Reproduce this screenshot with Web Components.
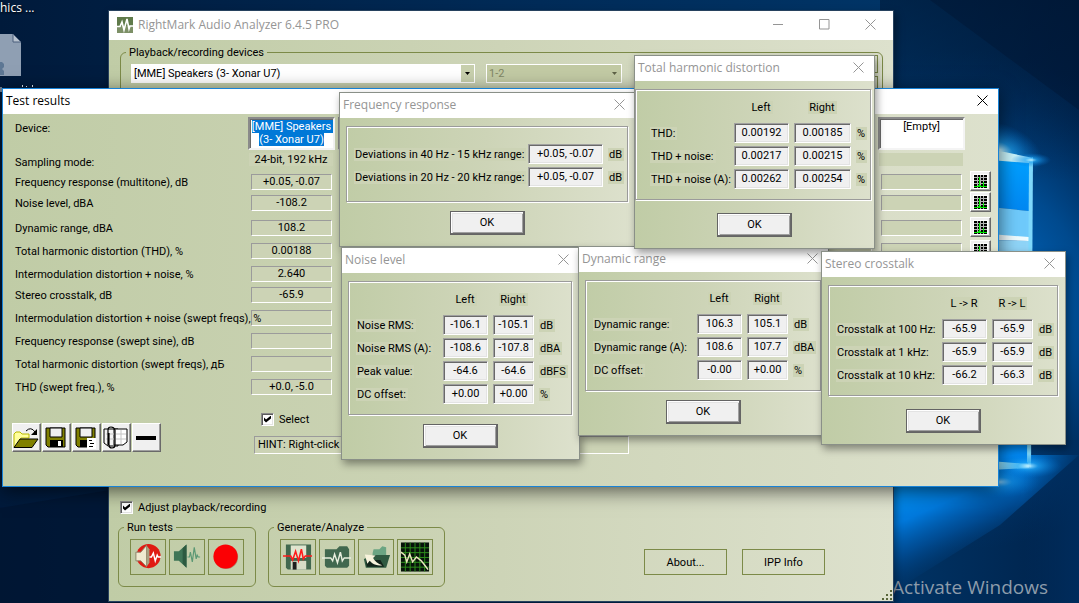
<!DOCTYPE html>
<html lang="en">
<head>
<meta charset="utf-8">
<title>RightMark Audio Analyzer 6.4.5 PRO</title>
<style>
  html, body { margin: 0; height: 100%; }
  body {
    font: 11px/13px Roboto, "Liberation Sans", Arial, sans-serif;
    color: #000;
    background: #001b3d;
    --caption-font: 12px/16px "Open Sans", "Noto Sans", sans-serif;
    --olive: #7c8a48;
    --patch: #ccd3b5;
    --face: linear-gradient(90deg, #c0cca6, #cdd4b7 50%, #dde1cd);
  }
  app-window, result-dialog { position: absolute; left: var(--x); top: var(--y); width: var(--w); }
  .main { --x: 108px; --y: 10px; --w: 784px; bottom: 1px; }
  .results { --x: 2px; --y: 88px; --w: 995px; }
  .freq { --x: 339px; --y: 92px; --w: 297px; }
  .noise { --x: 341px; --y: 247px; --w: 239px; }
  .dynamic { --x: 578px; --y: 246px; --w: 251px; }
  .thd { --x: 634px; --y: 55px; --w: 241px; }
  .crosstalk { --x: 821px; --y: 251px; --w: 245px; }
</style>
</head>
<body>
<desk-top>
  <app-window class="main" kind="main" heading="RightMark Audio Analyzer 6.4.5 PRO"><main-panel></main-panel></app-window>
  <app-window class="results" kind="active" heading="Test results"><results-panel></results-panel></app-window>
  <result-dialog class="freq" heading="Frequency response" widths="174,80"
    rows="Deviations in 40 Hz - 15 kHz range:|+0.05, -0.07|dB;Deviations in 20 Hz - 20 kHz range:|+0.05, -0.07|dB"></result-dialog>
  <result-dialog class="noise" heading="Noise level" cols="Left,Right" widths="87,50,46"
    rows="Noise RMS:|-106.1|-105.1|dB;Noise RMS (A):|-108.6|-107.8|dBA;Peak value:|-64.6|-64.6|dBFS;DC offset:|+0.00|+0.00|%"></result-dialog>
  <result-dialog class="dynamic" heading="Dynamic range" cols="Left,Right" widths="104,50,46"
    rows="Dynamic range:|106.3|105.1|dB;Dynamic range (A):|108.6|107.7|dBA;DC offset:|-0.00|+0.00|%"></result-dialog>
  <result-dialog class="thd" heading="Total harmonic distortion" cols="Left,Right" widths="84,60,62" flush gap="wide"
    rows="THD:|0.00192|0.00185|%;THD + noise:|0.00217|0.00215|%;THD + noise (A):|0.00262|0.00254|%"></result-dialog>
  <result-dialog class="crosstalk" heading="Stereo crosstalk" cols="L -&gt; R,R -&gt; L" widths="106,50,46" gap="wide"
    rows="Crosstalk at 100 Hz:|-65.9|-65.9|dB;Crosstalk at 1 kHz:|-65.9|-65.9|dB;Crosstalk at 10 kHz:|-66.2|-66.3|dB"></result-dialog>
</desk-top>

<script>
const define = (name, css, html, setup) => customElements.define(name, class extends HTMLElement {
  connectedCallback() {
    if (this.shadowRoot) return;
    const root = this.attachShadow({ mode: "open" });
    root.innerHTML = `<style>*{box-sizing:border-box}${css}</style>` + (typeof html === "function" ? html(this) : html);
    if (setup) setup(root, this);
  }
});

/* Desktop: wallpaper, a desktop icon and the activation notice. */
define("desk-top", `
  :host { display: block; position: relative; height: 100vh; overflow: hidden; }
  .wall { position: absolute; inset: 0; width: 100%; height: 100%; }
  .item { position: absolute; left: 0; top: 0; font: var(--caption-font); color: #fff; white-space: nowrap; text-shadow: 1px 1px 2px #000; }
  .item span { display: block; height: 30px; }
  .item svg { display: block; }
  .notice { position: absolute; right: 31px; bottom: 2px; font: 19px/27px "Open Sans", "Noto Sans", sans-serif; color: #8d9cab; white-space: nowrap; }
`, `
  <svg class="wall" viewBox="0 0 1079 603" preserveAspectRatio="xMaxYMin slice" aria-hidden="true">
    <defs>
      <linearGradient id="sky" x1="0" x2="1"><stop offset="0" stop-color="#001a3b"/><stop offset=".5" stop-color="#002b58"/><stop offset=".82" stop-color="#003466"/><stop offset="1" stop-color="#00224a"/></linearGradient>
      <radialGradient id="glow" gradientUnits="userSpaceOnUse" cx="960" cy="300" r="250"><stop offset="0" stop-color="#0078dc"/><stop offset=".5" stop-color="#005aaa" stop-opacity=".7"/><stop offset="1" stop-color="#003a78" stop-opacity="0"/></radialGradient>
      <radialGradient id="flare"><stop offset="0" stop-color="#c8f4ff"/><stop offset=".3" stop-color="#1fa4f4" stop-opacity=".7"/><stop offset="1" stop-color="#0070d0" stop-opacity="0"/></radialGradient>
      <linearGradient id="pane" x1="0" x2="0" y1="0" y2="1"><stop offset="0" stop-color="#00a0ff"/><stop offset="1" stop-color="#0087f2"/></linearGradient>
      <linearGradient id="beam" gradientUnits="userSpaceOnUse" x1="915" y1="478" x2="955" y2="568"><stop offset="0" stop-color="#0092f4"/><stop offset=".35" stop-color="#0079dc"/><stop offset=".65" stop-color="#0057a8" stop-opacity=".7"/><stop offset="1" stop-color="#003c78" stop-opacity="0"/></linearGradient>
      <linearGradient id="dusk" x1="0" x2="0" y1="0" y2="1"><stop offset="0" stop-color="#00142e" stop-opacity=".5"/><stop offset=".3" stop-color="#00142e" stop-opacity="0"/></linearGradient>
      <linearGradient id="fade" x1="0" x2="1"><stop offset=".3" stop-color="#002d5e" stop-opacity="0"/><stop offset="1" stop-color="#002d5e" stop-opacity=".9"/></linearGradient>
    </defs>
    <rect width="1079" height="603" fill="url(#sky)"/>
    <rect x="620" width="459" height="603" fill="url(#glow)"/>
    <path d="M930 0H1079V110Z" fill="#001735" opacity=".45"/>
    <rect x="880" width="199" height="603" fill="url(#dusk)"/>
    <path d="M0 508L110 490V603H0Z" fill="#00122c" opacity=".5"/>
    <path d="M880 455H1079L1000 525L880 600Z" fill="url(#beam)"/>
    <rect x="1000" y="440" width="79" height="163" fill="url(#fade)"/>
    <ellipse cx="1000" cy="150" rx="44" ry="26" fill="url(#flare)" transform="rotate(20 1000 150)"/>
    <path d="M990 149L1033 158V166L990 160Z" fill="#c9f5fc"/>
    <path d="M990 160L1029 163V211L990 207Z" fill="url(#pane)"/>
    <path d="M990 207L1029 211V239L990 234Z" fill="#6fcafb"/>
    <path d="M990 234L1029 237V241L990 240Z" fill="#effcff"/>
    <path d="M990 240L1029 241V330H990Z" fill="#8fd4f7"/>
    <path d="M990 330H1029V464L990 461Z" fill="url(#pane)"/>
    <path d="M1029 160L1033 157L1031 468L1027 462Z" fill="#7fd8fb"/>
    <path d="M990 461L1029 464V468L990 470Z" fill="#a5efff"/>
    <ellipse cx="1031" cy="160" rx="20" ry="7" fill="url(#flare)"/>
    <ellipse cx="1028" cy="466" rx="34" ry="12" fill="url(#flare)"/>
    <ellipse cx="1000" cy="482" rx="40" ry="16" fill="url(#flare)" opacity=".6"/>
  </svg>
  <div class="item">
    <span>hics ...</span>
    <svg width="36" height="62" aria-hidden="true">
      <path d="M0 4H13L21 12V46H0Z" fill="#8f9fb3"/><path d="M13 4V12H21Z" fill="#b8c2ce" stroke="#4a5f7c"/>
      <path d="M0 32h2l2 2v3l-2 2 2 2v4H0Z" fill="#5d7794"/>
      <path d="M1 57v5M22.500 55v2M26.500 56v1M32.500 55v2" stroke="#e6ecf2"/>
    </svg>
  </div>
  <div class="notice">Activate Windows</div>
  <slot></slot>
`);

/* Window frame: caption bar with its buttons, and a slot for the client area. */
const cross = `<svg width="11" height="11" viewBox="0 0 11 11" aria-hidden="true"><path d="M.5.500 10.500 10.500M10.500.500.500 10.500" fill="none" stroke="currentColor"/></svg>`;
define("app-window", `
  :host { display: flex; flex-direction: column; border: 1px solid #8a9088; box-shadow: 2px 4px 8px rgba(0,0,0,.4); background: var(--face); }
  :host([kind="main"]) { border-color: #27425f; }
  :host([kind="active"]) { border-color: #1883d7; box-shadow: 0 4px 18px rgba(0,0,0,.6); }
  header { display: flex; align-items: center; height: 25px; padding: 0 10px 2px 3px; background: #fff; color: #959595; font: var(--caption-font); }
  :host([kind="main"]) header { height: 29px; padding: 0 17px 2px 8px; }
  :host([kind="active"]) header { color: #000; }
  h1 { flex: 1; margin: 0; font: inherit; white-space: nowrap; }
  button { display: flex; width: 11px; height: 11px; margin-left: 35px; padding: 0; border: 0; background: none; color: inherit; }
  .logo { margin-right: 5px; }
  ::slotted(*) { flex: 1; }
`, host => {
  const main = host.getAttribute("kind") === "main";
  return `<header>
    ${main ? `<svg class="logo" width="16" height="16" aria-hidden="true"><rect width="16" height="16" fill="#5f7a4a"/><rect y="9" width="16" height="7" fill="#7d9067"/><path d="M0 9.500H3L5 5L7 13L10 2L12 12L13 9H16" fill="none" stroke="#fff" stroke-width="1.600"/></svg>` : ""}
    <h1>${host.getAttribute("heading")}</h1>
    ${main ? `<button aria-label="Minimize"><svg width="11" height="11" aria-hidden="true"><path d="M0 5.500H10" stroke="currentColor"/></svg></button>
    <button aria-label="Maximize"><svg width="11" height="11" aria-hidden="true"><path d="M.5.500H10V10H.5Z" fill="none" stroke="currentColor"/></svg></button>` : ""}
    <button aria-label="Close">${cross}</button>
  </header><slot></slot>`;
});

/* Sunken edit field, shared by the measurement dialogs. */
const fieldCss = `
  input.field { display: block; height: 20px; width: calc(100% - 5px); margin: 0; padding: 0; font: inherit; text-align: center; color: #000;
    background: #f0f0f0; border: 1px solid; border-color: #a0a0a0 #fff #fff #a0a0a0; outline: 0; box-shadow: inset 1px 1px #696969, inset -1px -1px #e3e3e3; }
`;

/* Measurement dialog: an etched frame round a table of readings, and an OK button. */
define("result-dialog", fieldCss + `
  :host { display: block; }
  app-window { display: flex; }
  .client { padding: 8px 7px 11px 6px; text-align: center; }
  :host([flush]) .client { padding: 8px 0 11px; }
  :host([flush]) .frame { margin-right: 3px; padding-left: 14px; }
  .frame { padding: 15px 0 13px 7px; border: 1px solid #9b9b9b; box-shadow: inset 1px 1px #fff, 1px 1px #fff; }
  .frame.headed { padding-top: 9px; padding-bottom: 9px; }
  table { width: 100%; table-layout: fixed; border-collapse: collapse; text-align: left; }
  th, td { padding: 0; height: 23px; font-weight: normal; white-space: nowrap; }
  tbody th, td.unit { padding-top: 2px; }
  thead td, thead th { height: 22px; vertical-align: top; }
  thead th { padding: 2px 5px 0 0; text-align: center; }
  .patch { padding: 0 2px 0 1px; background: var(--patch); }
  button { width: 75px; height: 24px; margin-top: 9px; padding: 0 0 1px; font: inherit; color: #000; background: #f0f0f0;
    border: 1px solid #646464; box-shadow: inset -1px -1px #696969, inset 1px 1px #fff, inset 2px 2px #e3e3e3, inset -2px -2px #a0a0a0; }
  :host([gap="wide"]) button { margin-top: 13px; }
`, host => {
  const cols = host.getAttribute("cols")?.split(",");
  const widths = host.getAttribute("widths").split(",");
  const patch = t => `<span class="patch">${t}</span>`;
  const rows = host.getAttribute("rows").split(";").map(r => {
    const [label, ...rest] = r.split("|"), unit = rest.pop();
    return `<tr><th scope="row">${patch(label)}</th>${rest.map((v, i) =>
      `<td><input class="field" readonly value="${v}" aria-label="${label} ${cols ? cols[i] : ""}"></td>`).join("")}<td class="unit">${patch(unit)}</td></tr>`;
  }).join("");
  return `<app-window heading="${host.getAttribute("heading")}"><div class="client">
    <div class="frame ${cols ? "headed" : ""}"><table>
      <colgroup>${widths.map(w => `<col style="width:${w}px">`).join("")}<col></colgroup>
      ${cols ? `<thead><tr><td></td>${cols.map(c => `<th scope="col">${patch(c)}</th>`).join("")}<td></td></tr></thead>` : ""}
      <tbody>${rows}</tbody></table></div>
    <button>OK</button></div></app-window>`;
});

/* Classic tick box with its label. */
define("check-box", `
  :host { display: block; }
  label { display: flex; align-items: center; gap: 5px; height: 14px; }
  input { appearance: none; position: relative; width: 13px; height: 13px; margin: 0; background: #fff; border: 1px solid; border-color: #8a8a8a #fff #fff #8a8a8a; box-shadow: inset 1px 1px #5c5c5c, inset -1px -1px #e3e3e3; }
  input:checked::before { content: ""; position: absolute; left: 2px; top: 2px; width: 7px; height: 7px; background: #000;
    clip-path: polygon(0 29%, 29% 57%, 100% 0, 100% 43%, 29% 100%, 0 72%); }
`, `<label><input type="checkbox" checked><slot></slot></label>`);

/* Rows of the results table: label, value in the first column, row height class. */
const resultRows = [
  ["Frequency response (multitone), dB", "+0.05, -0.07", "tight"], ["Noise level, dBA", "-108.2", "loose"],
  ["Dynamic range, dBA", "108.2", ""], ["Total harmonic distortion (THD), %", "0.00188", ""],
  ["Intermodulation distortion + noise, %", "2.640", "tight"], ["Stereo crosstalk, dB", "-65.9", ""],
  ["Intermodulation distortion + noise (swept freqs), %", "", ""], ["Frequency response (swept sine), dB", "", ""],
  ["Total harmonic distortion (swept freqs), дБ", "", ""], ["THD (swept freq.), %", "+0.0, -5.0", ""]
];
const graphIcon = `<svg width="15" height="15" shape-rendering="crispEdges" aria-hidden="true"><rect width="15" height="15" fill="#fff"/><rect x="1" y="1" width="13" height="13" fill="#000"/><path d="M4.500 1V14M7.500 1V14M10.500 1V14M1 3.500H14M1 6.500H14M1 9.500H14" stroke="#b4b4b4"/><path d="M1 12.500H14M6.500 3V13M10.500 8V13M5 11.500H8" fill="none" stroke="#00e800"/></svg>`;
const toolIcons = [
  ["Open", `<path d="M1 22V9l2-2h4l2 2h7v4H8L4 22Z" fill="#ffff9c" stroke="#b8b800"/><path d="M1 22.500 7 14H25L19 22.500Z" fill="#808000" stroke="#000"/><path d="M13 6q5-5 9 1" fill="none" stroke="#000"/><path d="M24 4v6h-6Z"/>`],
  ["Save", `<path d="M3 3H22V22H5L3 20Z" fill="#808000" stroke="#000"/><path d="M7 3H19V12H7Z" fill="#f0f0f0" stroke="#000"/><path d="M7 15H20V22H7Z"/><path d="M15 16h3v5h-3Z" fill="#fff"/>`],
  ["Save report", `<path d="M3 3H22V22H5L3 20Z" fill="#808000" stroke="#000"/><path d="M7 3H19V12H7Z" fill="#f0f0f0" stroke="#000"/><path d="M7 15H14V22H7Z"/><path d="M14 13H23V24H14Z" fill="#fff"/><path d="M16 15.500h3M17 18.500h4M16 21.500h4" stroke="#000"/>`],
  ["Copy", `<path d="M1 4H15V21H5L1 18Z" fill="#f4f4f4" stroke="#000"/><path d="M11 4H24V17L20 20H11Z" fill="#fff" stroke="#000"/><path d="M3 9H11M3 14H11M13 9H23M13 14H23M18 5V19" stroke="#c4c4c4"/><path d="M5 20V5q0-3 3-3t4 3V20q0 3-3 3t-3-3V8" fill="none" stroke="#000" stroke-width="1.200"/>`],
  ["Remove", `<path d="M3 11H23V15H3Z"/>`]
];

define("results-panel", `
  :host { display: block; padding: 3px 7px 32px 9px; }
  table { width: 100%; table-layout: fixed; border-collapse: collapse; }
  th, td { padding: 0; font-weight: normal; text-align: left; vertical-align: top; white-space: nowrap; }
  th { padding: 5px 0 0 3px; }
  .value { width: 90px; }
  .act { width: 23px; }
  .head { height: 36px; } .mode { height: 18px; }
  .row { height: 23px; } .row.tight { height: 21px; } .row.loose { height: 25px; }
  textarea { display: block; width: 87px; height: 33px; margin: 0; padding: 1px 0; resize: none; overflow: hidden; font: inherit; text-align: center; color: #000; background: #fff;
    border: 2px solid; border-color: #8a8a8a #f4f4f4 #f4f4f4 #8a8a8a; outline: 0; box-shadow: inset 1px 1px #696969; }
  textarea::selection { background: #0078d7; color: #fff; }
  .mode th { padding-top: 3px; }
  .mode td div { height: 13px; width: 84px; margin-left: 1px; background: var(--patch); text-align: center; }
  .row td div { width: 81px; height: 16px; margin: 3px 0 0 3px; line-height: 14px; text-align: center; background: var(--patch); border: 1px solid; border-color: #9b9b9b #fff #fff #9b9b9b; }
  .row button { display: flex; justify-content: center; align-items: center; width: 21px; height: 20px; margin-left: 2px; padding: 0; background: #f0f0f0; border: 1px solid; border-color: #fff #696969 #696969 #fff; box-shadow: inset -1px -1px #a0a0a0; }
  footer { display: grid; grid-template-columns: 242px 375px; padding-top: 13px; }
  .tools { display: flex; gap: 1px; padding-top: 11px; }
  .tools button { width: 29px; height: 29px; padding: 0; background: #f0f0f0; border: 1px solid; border-color: #fff #696969 #696969 #fff; box-shadow: inset -1px -1px #a0a0a0; }
  .tools svg { display: block; }
  check-box { margin-left: 7px; }
  .hint { height: 18px; margin: 10px 0 0; padding: 1px 3px; background: var(--patch); border: 1px solid; border-color: #9b9b9b #fff #fff #9b9b9b; }
`, () => {
  const others = [1, 2, 3, 4, 5, 6];
  return `<table>
    <colgroup><col>${"<col class='value'>".repeat(8)}<col class="act"></colgroup>
    <tr class="head"><th scope="row">Device:</th><td><textarea id="device" readonly aria-label="Device 1">[MME] Speakers (3- Xonar U7)</textarea></td>
      ${others.map(i => `<td><textarea readonly aria-label="Device ${i + 1}"></textarea></td>`).join("")}
      <td><textarea readonly aria-label="Device 8">[Empty]</textarea></td><td></td></tr>
    <tr class="mode"><th scope="row">Sampling mode:</th><td><div>24-bit, 192 kHz</div></td>${"<td><div></div></td>".repeat(7)}<td></td></tr>
    ${resultRows.map(([label, value, cls]) => `<tr class="row ${cls}"><th scope="row">${label}</th><td><div>${value}</div></td>${"<td><div></div></td>".repeat(7)}<td><button aria-label="Show graph">${graphIcon}</button></td></tr>`).join("")}
  </table>
  <footer>
    <div class="tools">${toolIcons.map(([n, s]) => `<button aria-label="${n}"><svg width="26" height="26" aria-hidden="true">${s}</svg></button>`).join("")}</div>
    <div><check-box>Select</check-box><p class="hint">HINT: Right-click</p></div>
  </footer>`;
}, root => {
  const device = root.getElementById("device");
  device.focus({ preventScroll: true });
  device.select();
});

/* Rounded olive frame with a legend. */
define("group-box", `
  :host { display: block; }
  fieldset { min-width: 0; margin: 0; padding: 0 10px; border: 1px solid var(--olive); border-radius: 6px; }
  legend { margin-left: -5px; padding: 0 3px; }
`, host => `<fieldset><legend>${host.getAttribute("legend")}</legend><slot></slot></fieldset>`);

const drop = c => `<svg width="13" height="16" aria-hidden="true"><path d="M4 7h5L6.500 10Z" fill="${c}"/></svg>`;
const runIcons = [
  ["Run full test", `<circle cx="16" cy="15" r="12.500" fill="#e01a12"/><path d="M3 11H8L14 4V26L8 20H3Z" fill="#f0ead0" stroke="#8b8468"/><path d="M14 4l3 4v14l-3 4Z" fill="#a9a182"/><path d="M17 16h2l2-4 2 8 2-6 1 2h3" fill="none" stroke="#fff" stroke-width="1.500"/>`],
  ["Play", `<path d="M2 10H7L15 3V27L7 20H2Z" fill="#3f7556"/><path d="M11 7l4-4V27l-4-4Z" fill="#2c5a40"/><path d="M16 16h2l1-5 2 10 2-15 2 12 1-4 1 2h2" fill="none" stroke="#5b9874" stroke-width="1.200"/>`],
  ["Record", `<circle cx="15.500" cy="16" r="12.500" fill="#9c2a20" opacity=".5"/><circle cx="15" cy="15.500" r="12.500" fill="#fb0004"/>`]
];
const genIcons = [
  ["Save signal", `<path d="M3 3H29V29H5L3 27Z" fill="#41684f"/><path d="M8 4H24V17H8Z" fill="#dfe5cf"/><path d="M8 20H24V29H8Z" fill="#d5dcc6"/><path d="M10 21h4v8h-4Z" fill="#1d1d1d"/><path d="M0 15H8L10 19 13 10 16 20 19 8 21 18 23 15H30" fill="none" stroke="#ff1b1b" stroke-width="1.600"/>`],
  ["Analyze file", `<path d="M3 8H15L18 5H26L28 8V25L26 27H5L3 25Z" fill="#41684f"/><path d="M0 17H9L11 20 13 13 16 22 19 11 21 20 23 17H30" fill="none" stroke="#e8eede" stroke-width="1.500"/>`],
  ["Load results", `<path d="M12 12 13 8H19L22 5L26 6V16H12Z" fill="#6ba583"/><path d="M13 14H30L26 27 5 27 3 18Z" fill="#2f5a41"/><path d="M5 19H20L24 26H6Z" fill="#12241a"/><path d="M4 13.500 15 14.500 12.500 17Q15 22 22 24.500Q14 26 9 20L6.500 23Z" fill="#f7f3dc"/>`],
  ["Spectrum", `<rect x="1" y="1" width="29" height="30" fill="#07130a"/><path d="M5.500 1V31M10.500 1V31M15.500 1V31M20.500 1V31M25.500 1V31M1 6.500H30M1 11.500H30M1 16.500H30M1 21.500H30M1 26.500H30" stroke="#2f8f1c"/><path d="M1 11 5 14 7 21 10 13 13 21 17 16 22 20 26 25 29 29" fill="none" stroke="#e9e6bd" stroke-width="1.500"/>`]
];
const iconButtons = list => list.map(([n, s]) => `<button class="icon" aria-label="${n}"><svg width="30" height="32" viewBox="0 0 31 32" aria-hidden="true">${s}</svg></button>`).join("");

/* Client area of the main program window. */
define("main-panel", `
  :host { display: flex; flex-direction: column; justify-content: space-between; position: relative; padding: 6px 10px 14px 11px; }
  .bottom { display: flex; align-items: flex-end; gap: 12px; margin: 7px 0 0 -2px; }
  .devices { display: flex; align-items: flex-start; gap: 11px; height: 120px; margin-top: 5px; }
  .combo { display: grid; grid-template-columns: 1fr 13px; width: 344px; height: 19px; border: 1px solid #fff; background: #fff; }
  .combo.off { width: 136px; background: #c2caa4; color: #808665; }
  .combo svg { grid-area: 1 / 2; background: #c8d0ae; height: 17px; pointer-events: none; }
  .combo.off svg { background: none; }
  select { grid-area: 1 / 1 / 2 / 3; appearance: none; width: 100%; margin: 0; padding: 0 2px; border: 0; border-radius: 0; background: none; font: inherit; color: inherit; opacity: 1; outline: 0; }
  .side { display: grid; gap: 3px; margin: -9px -6px 0 auto; }
  .side button { width: 28px; height: 18px; padding: 0; background: none; border: 1px solid var(--olive); }
  .icons { display: flex; gap: 3px; padding: 5px 1px 11px; }
  .icon { display: flex; justify-content: center; align-items: center; width: 36px; height: 36px; padding: 0; background: none; border: 1px solid var(--olive); }
  .text { width: 83px; height: 26px; padding: 0; font: inherit; color: #000; background: none; border: 1px solid var(--olive); }
  .cmds { display: flex; gap: 15px; margin: 0 58px 12px auto; }
  .grip { position: absolute; right: 0; bottom: 0; }
`, `
  <group-box legend="Playback/recording devices">
    <div class="devices">
      <div class="combo"><select aria-label="Playback device"><option>[MME] Speakers (3- Xonar U7)</option></select>${drop("#000")}</div>
      <div class="combo off"><select disabled aria-label="Channels" style="color:inherit"><option>1-2</option></select>${drop("#5d6146")}</div>
      <div class="side"><button aria-label="Playback properties"></button><button aria-label="Recording properties"></button></div>
    </div>
  </group-box>
  <div>
    <check-box>Adjust playback/recording</check-box>
    <div class="bottom">
      <group-box legend="Run tests"><div class="icons">${iconButtons(runIcons)}</div></group-box>
      <group-box legend="Generate/Analyze"><div class="icons">${iconButtons(genIcons)}</div></group-box>
      <div class="cmds"><button class="text">About...</button><button class="text">IPP Info</button></div>
    </div>
  </div>
  <svg class="grip" width="11" height="11" shape-rendering="crispEdges" aria-hidden="true"><path d="M8 0h2v2h-2ZM4 4h2v2h-2ZM8 4h2v2h-2ZM0 8h2v2h-2ZM4 8h2v2h-2ZM8 8h2v2h-2Z" fill="#59663a"/></svg>
`);
</script>
</body>
</html>
